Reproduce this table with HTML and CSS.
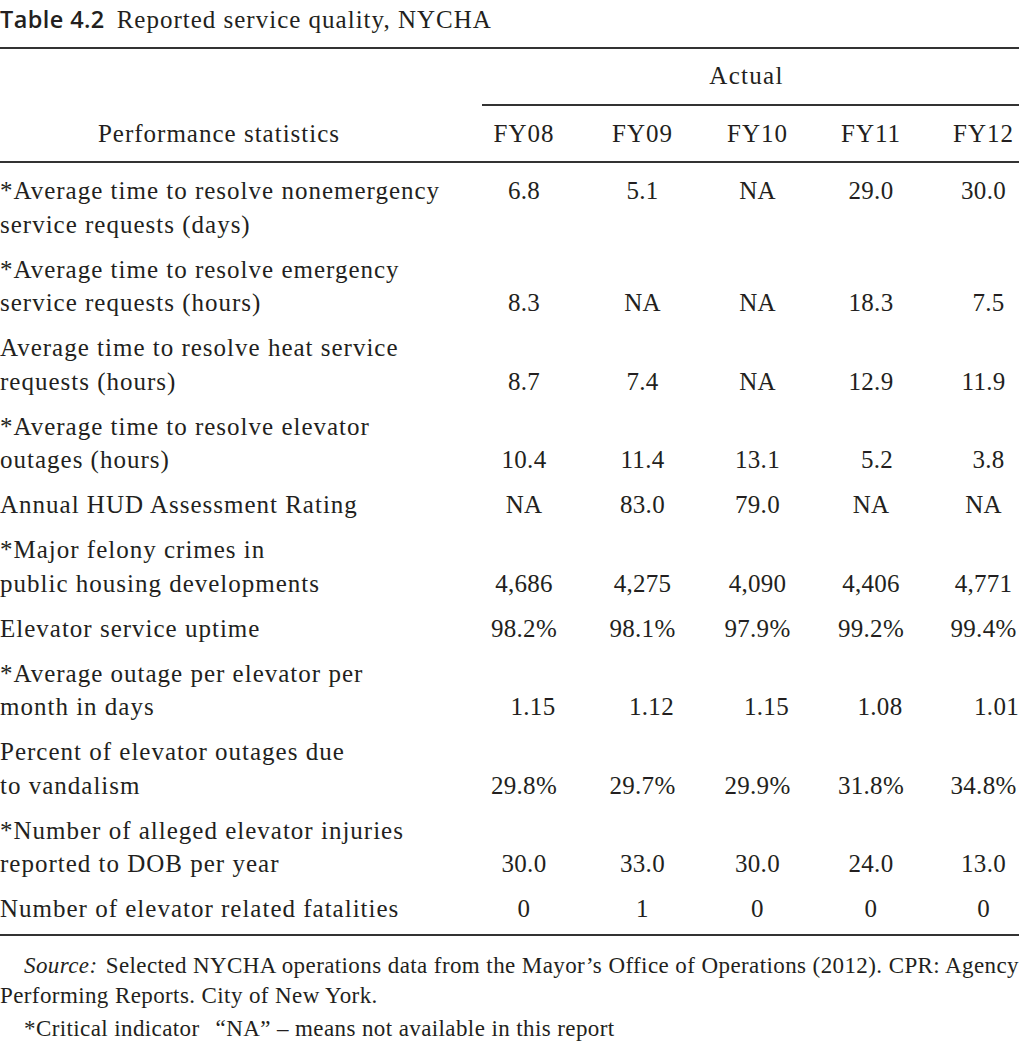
FILE: index.html
```html
<!DOCTYPE html>
<html lang="en">
<head>
<meta charset="utf-8">
<title>Table 4.2 Reported service quality, NYCHA</title>
<link rel="stylesheet" href="styles.css">
</head>
<body>
<div class="page">
  <h1 class="caption"><span class="caption-num">Table 4.2</span><span class="caption-text">Reported service quality, NYCHA</span></h1>
  <table class="stats">
    <colgroup>
      <col class="c-label">
      <col class="c-1">
      <col class="c-2">
      <col class="c-3">
      <col class="c-4">
      <col class="c-5">
    </colgroup>
    <thead>
      <tr>
        <th class="h-label head-bottom" rowspan="2">Performance statistics</th>
        <th class="h-group" colspan="5"><div class="group-label">Actual</div></th>
      </tr>
      <tr>
        <th class="h-year head-bottom">FY08</th>
        <th class="h-year head-bottom">FY09</th>
        <th class="h-year head-bottom">FY10</th>
        <th class="h-year head-bottom">FY11</th>
        <th class="h-year h-last head-bottom">FY12</th>
      </tr>
    </thead>
    <tbody>
      <tr class="row-top">
        <td class="label">*Average time to resolve nonemergency<br>service requests (days)</td>
        <td>6.8</td><td>5.1</td><td>NA</td><td>29.0</td><td class="last">30.0</td>
      </tr>
      <tr>
        <td class="label">*Average time to resolve emergency<br>service requests (hours)</td>
        <td>8.3</td><td>NA</td><td>NA</td><td>18.3</td><td class="last nudge">7.5</td>
      </tr>
      <tr>
        <td class="label">Average time to resolve heat service<br>requests (hours)</td>
        <td>8.7</td><td>7.4</td><td>NA</td><td>12.9</td><td class="last">11.9</td>
      </tr>
      <tr>
        <td class="label">*Average time to resolve elevator<br>outages (hours)</td>
        <td>10.4</td><td>11.4</td><td>13.1</td><td class="nudge">5.2</td><td class="last nudge">3.8</td>
      </tr>
      <tr>
        <td class="label">Annual HUD Assessment Rating</td>
        <td>NA</td><td>83.0</td><td>79.0</td><td>NA</td><td class="last">NA</td>
      </tr>
      <tr>
        <td class="label">*Major felony crimes in<br>public housing developments</td>
        <td>4,686</td><td>4,275</td><td>4,090</td><td>4,406</td><td class="last">4,771</td>
      </tr>
      <tr>
        <td class="label">Elevator service uptime</td>
        <td>98.2%</td><td>98.1%</td><td>97.9%</td><td>99.2%</td><td class="last">99.4%</td>
      </tr>
      <tr class="row-shift">
        <td class="label">*Average outage per elevator per<br>month in days</td>
        <td>1.15</td><td>1.12</td><td>1.15</td><td>1.08</td><td class="last">1.01</td>
      </tr>
      <tr>
        <td class="label">Percent of elevator outages due<br>to vandalism</td>
        <td>29.8%</td><td>29.7%</td><td>29.9%</td><td>31.8%</td><td class="last">34.8%</td>
      </tr>
      <tr>
        <td class="label">*Number of alleged elevator injuries<br>reported to DOB per year</td>
        <td>30.0</td><td>33.0</td><td>30.0</td><td>24.0</td><td class="last">13.0</td>
      </tr>
      <tr class="row-end">
        <td class="label">Number of elevator related fatalities</td>
        <td>0</td><td>1</td><td>0</td><td>0</td><td class="last">0</td>
      </tr>
    </tbody>
  </table>
  <div class="notes">
    <p class="note note-source"><em class="note-lead">Source:</em> Selected NYCHA operations data from the Mayor’s Office of Operations (2012). CPR: Agency Performing Reports. City of New York.</p>
    <p class="note">*Critical indicator<span class="note-gap">“NA” – means not available in this report</span></p>
  </div>
</div>
</body>
</html>
```

FILE: styles.css
```css
html, body {
  margin: 0;
  padding: 0;
  background: #ffffff;
}

body {
  font-family: "Liberation Serif", "Times New Roman", serif;
  color: #231f20;
}

.page {
  width: 1019px;
}

/* Caption */
.caption {
  margin: 4px 0 12px 0;
  font-weight: normal;
  font-size: 25px;
  line-height: 30px;
  white-space: nowrap;
}

.caption-num {
  font-family: "Open Sans", "Liberation Sans", sans-serif;
  font-weight: 600;
  font-size: 23.5px;
  letter-spacing: 0.4px;
  margin-right: 12px;
}

.caption-text {
  font-family: "Liberation Serif", "Times New Roman", serif;
  letter-spacing: 1px;
}

/* Table */
.stats {
  width: 1019px;
  table-layout: fixed;
  border-collapse: separate;
  border-spacing: 0;
  border-top: 2px solid #333;
  border-bottom: 2px solid #333;
  font-size: 25px;
}

.c-label { width: 464px; }
.c-1 { width: 120px; }
.c-2 { width: 117px; }
.c-3 { width: 113px; }
.c-4 { width: 114px; }
.c-5 { width: 91px; }

.stats th {
  font-weight: normal;
  line-height: 33px;
  padding: 0;
  white-space: nowrap;
  letter-spacing: 1px;
}

.head-bottom {
  border-bottom: 2px solid #333;
}

.h-label {
  text-align: center;
  vertical-align: bottom;
  padding: 0 26px 11.5px 0 !important;
}

.h-group {
  padding: 0 !important;
}

.group-label {
  margin-left: 18px;
  padding: 10px 8px 12px 0;
  border-bottom: 2px solid #333;
  text-align: center;
  line-height: 33px;
  letter-spacing: 1.3px;
}

.h-year {
  text-align: center;
  padding: 10.5px 0 11.5px 0 !important;
}

.h-last {
  padding-left: 20px !important;
}

.stats td {
  padding: 5.75px 0;
  line-height: 33.5px;
  text-align: center;
  vertical-align: bottom;
  white-space: nowrap;
  letter-spacing: 0.3px;
}

.stats td.label {
  text-align: left;
  letter-spacing: 1px;
}

.stats td.last {
  padding-left: 20px;
}

.stats td.nudge {
  padding-left: 12px;
}

.stats td.last.nudge {
  padding-left: 30px;
}

.row-top td {
  vertical-align: top;
  padding-top: 11px;
}

.row-shift td {
  padding-left: 18px;
}

.row-shift td.label {
  padding-left: 0;
}

.row-shift td.last {
  padding-left: 46px;
}

.row-end td {
  padding-bottom: 8.5px;
}

/* Notes */
.notes {
  margin-top: 15px;
}

.note {
  margin: 0;
  font-size: 23px;
  line-height: 30px;
  letter-spacing: 0.4px;
  text-indent: 24px;
  text-align: justify;
}

.note-lead {
  margin-right: 2px;
}

.note + .note {
  margin-top: 3px;
}

.note-gap {
  margin-left: 16px;
}
```
